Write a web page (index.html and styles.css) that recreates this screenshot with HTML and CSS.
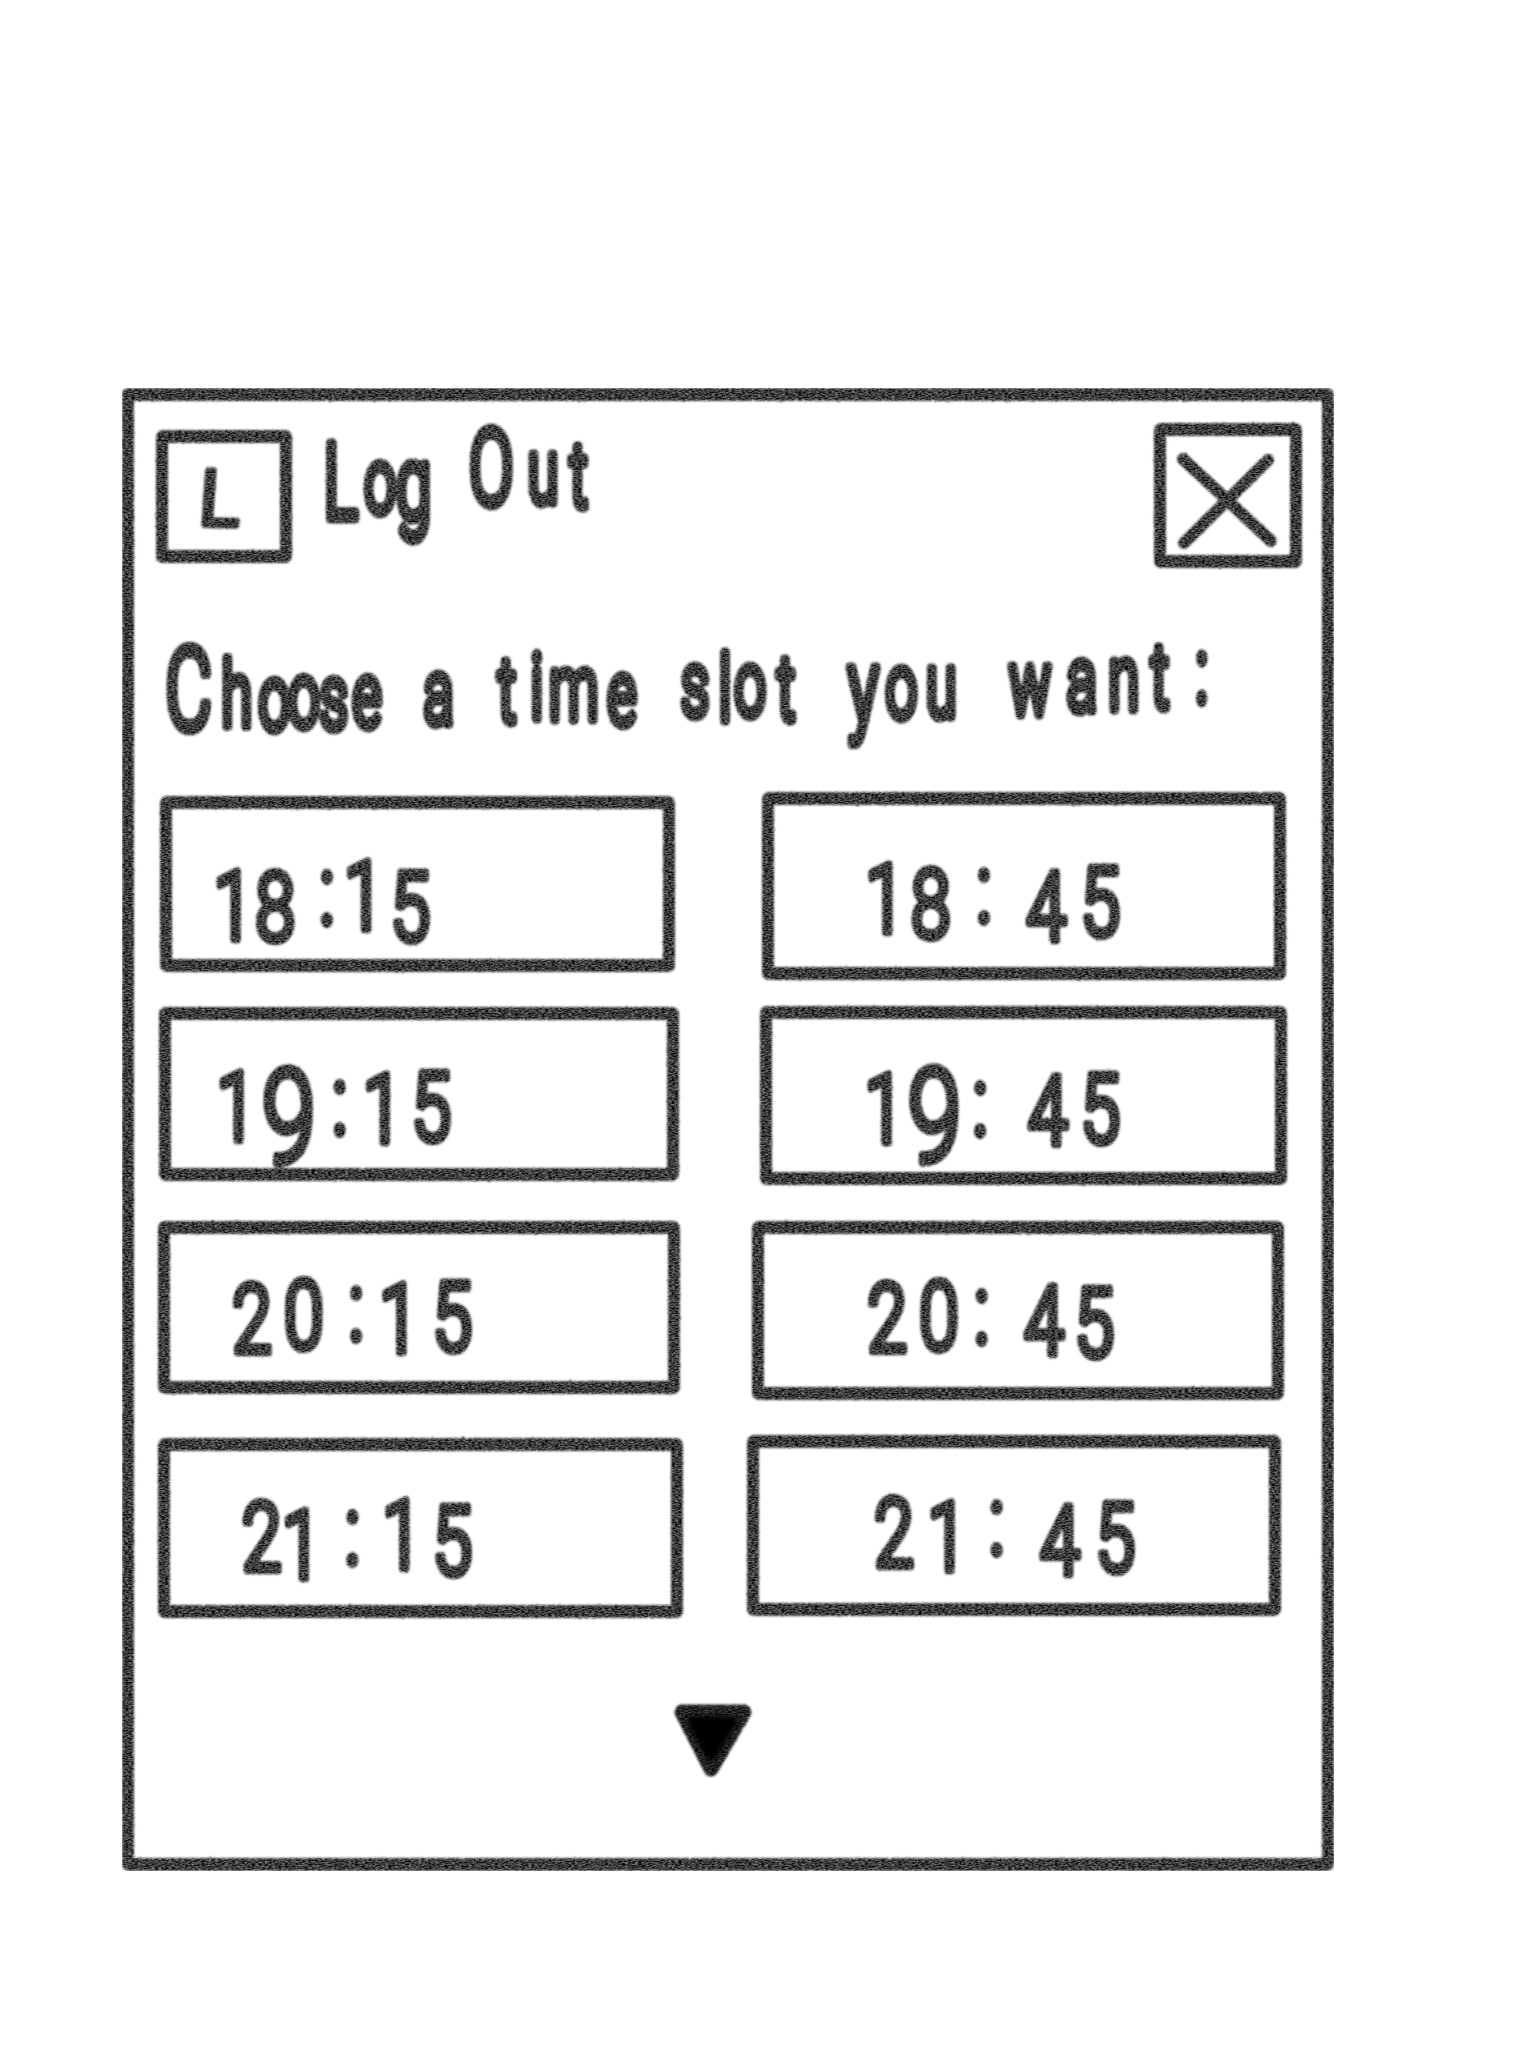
FILE: index.html
```html
<!DOCTYPE html>
<html lang="en">
<head>
<meta charset="utf-8">
<title>Choose a time slot</title>
<link rel="stylesheet" href="styles.css">
</head>
<body>
<main class="panel">
  <header class="topbar">
    <div class="account">
      <button class="box logout-box" aria-label="Log out">
        <svg class="fill" viewBox="168 443 112 107"><text class="ink initial" transform="rotate(1 222 500) skewX(-3)" x="246" y="525">L</text></svg>
      </button>
      <svg class="logout-label" viewBox="306 423 300 145">
        <text class="ink letters" transform="scale(.625 1)" x="545 608 662 720 786 869 926" y="518 512 518 511 504 502 506"><tspan class="log-cap">L</tspan>o<tspan class="tail">g</tspan> <tspan class="log-cap">O</tspan>ut</text>
      </svg>
    </div>
    <button class="box close-box" aria-label="Close">
      <svg class="fill" viewBox="1166 436 124 119"><path class="cross" d="M1183 459 1271 541"/><path class="cross" d="M1268 460 1184 543"/></svg>
    </button>
  </header>

  <h1 class="title">
    <svg class="fill" viewBox="156 630 1146 140">
      <text class="ink letters" transform="scale(.625 1)" x="302 379 439 486 534 587 640 702 760 811 859 918 995 1050 1112 1160 1200 1258 1320 1381 1442 1506 1570 1648 1731 1798 1856 1923" y="729 725 729 726 728 726 727 723 723 721 718 719 724 720 715 720 715 719 719 722 717 716 716 714 710 709 707 702"><tspan class="title-cap">C</tspan>hoose a time slot <tspan class="tail">y</tspan>ou want:</text>
    </svg>
  </h1>

  <section class="slots">
    <div class="column">
      <button class="box slot l1"><svg class="fill" viewBox="172 809 491 150"><text class="ink" transform="scale(.75 1)" x="311 367 436 485 547" y="939 940 924 929 940">18:15</text></svg></button>
      <button class="box slot l2"><svg class="fill" viewBox="171 1020 496 148"><text class="ink" transform="scale(.75 1)" x="315 385 453 510 575" y="1140 1162 1134 1142 1140">1<tspan class="nine">9</tspan>:15</text></svg></button>
      <button class="box slot l3"><svg class="fill" viewBox="170 1234 498 147"><text class="ink" transform="scale(.75 1)" x="336 405 475 532 603" y="1352 1348 1340 1352 1350">20:15</text></svg></button>
      <button class="box slot l4"><svg class="fill" viewBox="170 1451 501 154"><text class="ink" transform="scale(.75 1)" x="349 402 470 536 603" y="1570 1578 1564 1568 1574">21:15</text></svg></button>
    </div>
    <div class="column">
      <button class="box slot r1"><svg class="fill" viewBox="774 805 500 162"><text class="ink" transform="scale(.75 1)" x="1180 1241 1312 1395 1467" y="932 937 922 940 935">18:45</text></svg></button>
      <button class="box slot r2"><svg class="fill" viewBox="772 1019 503 153"><text class="ink" transform="scale(.75 1)" x="1179 1246 1307 1397 1467" y="1142 1161 1135 1144 1142">1<tspan class="nine">9</tspan>:45</text></svg></button>
      <button class="box slot r3"><svg class="fill" viewBox="764 1234 508 153"><text class="ink" transform="scale(.75 1)" x="1183 1252 1309 1392 1459" y="1351 1349 1343 1354 1356">20:45</text></svg></button>
      <button class="box slot r4"><svg class="fill" viewBox="759 1448 510 155"><text class="ink" transform="scale(.75 1)" x="1192 1263 1329 1413 1487" y="1566 1570 1554 1574 1571">21:45</text></svg></button>
    </div>
  </section>

  <button class="more" aria-label="More time slots">
    <svg class="fill" viewBox="672 1702 82 78"><path class="arrow" d="M682 1712H744L711 1769Z"/><path class="arrow-core" d="M692 1721H733L711 1757Z"/></svg>
  </button>
</main>

<!-- Charcoal texture shared by all strokes -->
<svg class="defs" width="0" height="0" aria-hidden="true">
  <filter id="charcoal" x="0" y="0" width="1" height="1" color-interpolation-filters="sRGB">
    <feTurbulence type="fractalNoise" baseFrequency=".3 .75" numOctaves="3" seed="4" result="n"/>
    <feColorMatrix in="n" values="1.9 0 0 0 -.45  1.9 0 0 0 -.45  1.9 0 0 0 -.45  0 0 0 0 1" result="grain"/>
    <feDisplacementMap in="SourceGraphic" in2="n" scale="2" xChannelSelector="G" yChannelSelector="B" result="rough"/>
    <feGaussianBlur in="rough" stdDeviation=".8" result="soft"/>
    <feComposite in="soft" in2="grain" operator="arithmetic" k1="1" k2="0" k3="0" k4="0"/>
  </filter>
  <filter id="smudge" x="-.2" y="-.2" width="1.4" height="1.4"><feGaussianBlur stdDeviation="2.5"/></filter>
</svg>
</body>
</html>
```

FILE: styles.css
```css
* { box-sizing: border-box; }

body {
  margin: 0;
  background: #fff;
  overflow: hidden;
}

button {
  padding: 0;
  background: none;
  font: inherit;
}

.panel {
  display: flex;
  flex-direction: column;
  width: 1212px;
  height: 1483px;
  margin: 388px 0 0 122px;
  padding: 22px 20px 0 22px;
  border: 13px solid #787878;
  border-width: 13px 12px;
  border-radius: 7px;
  filter: url(#charcoal);
}

.box {
  display: block;
  border: 13px solid #787878;
  border-width: 13px 12px;
  border-radius: 7px;
}

.fill {
  display: block;
  width: 100%;
  height: 100%;
  overflow: visible;
}

.ink {
  font-family: Roboto, "Open Sans", sans-serif;
  font-size: 95px;
  font-weight: 300;
  text-anchor: middle;
  fill: #787878;
  stroke: #787878;
  stroke-width: 8.5px;
  stroke-linejoin: round;
  stroke-linecap: round;
}

.letters {
  font-size: 89px;
  stroke-width: 11px;
}

.initial { font-size: 76px; stroke-width: 7px; }
.log-cap { font-size: 104px; }
.title-cap { font-size: 114px; }
.tail { font-size: 102px; }
.nine { font-size: 130px; }

.topbar {
  display: flex;
  justify-content: space-between;
  height: 145px;
}

.account { display: flex; gap: 14px; }
.logout-box { width: 136px; height: 133px; margin-top: 7px; }
.logout-label { width: 300px; height: 145px; overflow: visible; }
.close-box { width: 148px; height: 145px; }

.cross {
  fill: none;
  stroke: #787878;
  stroke-width: 12;
  stroke-linecap: round;
}

.title {
  height: 140px;
  margin: 62px 0 0;
}

.slots {
  display: flex;
  gap: 64px;
  height: 826px;
  margin: 22px 0 0 2px;
}

.column { width: 525px; }

.l1 { width: 515px; height: 176px; margin: 4px 0 0 2px; }
.l2 { width: 520px; height: 174px; margin: 35px 0 0 1px; }
.l3 { width: 522px; height: 173px; margin: 40px 0 0; }
.l4 { width: 525px; height: 180px; margin: 44px 0 0; }
.r1 { width: 524px; height: 188px; margin: 0 0 0 15px; }
.r2 { width: 527px; height: 179px; margin: 26px 0 0 13px; }
.r3 { width: 532px; height: 179px; margin: 36px 0 0 5px; }
.r4 { width: 534px; height: 181px; margin: 35px 0 0; }

.more {
  width: 82px;
  height: 78px;
  margin: 84px 0 0 516px;
  border: 0;
}

.arrow {
  fill: #303030;
  stroke: #484848;
  stroke-width: 15;
  stroke-linejoin: round;
}

.arrow-core {
  fill: #000;
  stroke: #000;
  stroke-width: 10;
  stroke-linejoin: round;
  filter: url(#smudge);
}

.defs { position: absolute; }
```
